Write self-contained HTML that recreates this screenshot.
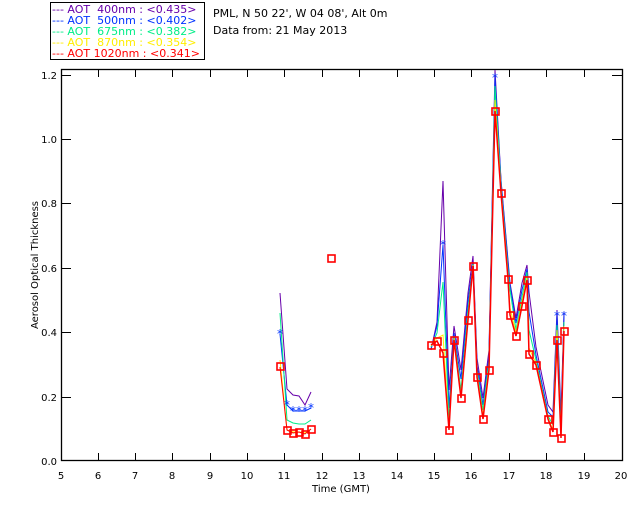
<!DOCTYPE html>
<html><head><style>
html,body{margin:0;padding:0;background:#fff;width:640px;height:512px;overflow:hidden}
svg{display:block;font-family:"DejaVu Sans","Liberation Sans",sans-serif}
</style></head><body>
<svg width="640" height="512" viewBox="0 0 640 512" xmlns="http://www.w3.org/2000/svg">
<rect x="0" y="0" width="640" height="512" fill="#fff"/>
<rect x="50.5" y="2.5" width="154" height="57" fill="none" stroke="#000"/>
<g font-size="11">
<text x="52" y="13" fill="#6600aa">--- AOT&#160; 400nm : &lt;0.435&gt;</text>
<text x="52" y="24" fill="#0033ff">--- AOT&#160; 500nm : &lt;0.402&gt;</text>
<text x="52" y="35" fill="#00ee88">--- AOT&#160; 675nm : &lt;0.382&gt;</text>
<text x="52" y="46" fill="#ffee00">--- AOT&#160; 870nm : &lt;0.354&gt;</text>
<text x="52" y="57" fill="#ff0000">--- AOT 1020nm : &lt;0.341&gt;</text>
</g>
<g font-size="11" fill="#000">
<text x="213" y="17">PML, N 50 22', W 04 08', Alt 0m</text>
<text x="213" y="34">Data from: 21 May 2013</text>
</g>
<g stroke="#000" fill="none" stroke-width="1.3">
<rect x="61.5" y="69.5" width="561" height="391"/>
</g>
<g stroke="#000" stroke-width="1">
<path d="M98.5 461v-8M135.5 461v-8M172.5 461v-8M210.5 461v-8M247.5 461v-8M284.5 461v-8M322.5 461v-8M359.5 461v-8M397.5 461v-8M434.5 461v-8M471.5 461v-8M509.5 461v-8M546.5 461v-8M584.5 461v-8"/>
<path d="M98.5 69v8M135.5 69v8M172.5 69v8M210.5 69v8M247.5 69v8M284.5 69v8M322.5 69v8M359.5 69v8M397.5 69v8M434.5 69v8M471.5 69v8M509.5 69v8M546.5 69v8M584.5 69v8"/>
<path d="M61 75.5h10M61 139.5h10M61 203.5h10M61 268.5h10M61 332.5h10M61 397.5h10M622 75.5h-10M622 139.5h-10M622 203.5h-10M622 268.5h-10M622 332.5h-10M622 397.5h-10"/>
</g>
<g font-size="10" fill="#000" text-anchor="middle">
<text x="61" y="479">5</text><text x="98" y="479">6</text><text x="135" y="479">7</text><text x="172" y="479">8</text><text x="210" y="479">9</text><text x="247" y="479">10</text><text x="284" y="479">11</text><text x="322" y="479">12</text><text x="359" y="479">13</text><text x="397" y="479">14</text><text x="434" y="479">15</text><text x="471" y="479">16</text><text x="509" y="479">17</text><text x="546" y="479">18</text><text x="584" y="479">19</text><text x="621" y="479">20</text>
<text x="341" y="492">Time (GMT)</text>
</g>
<g font-size="10" fill="#000" text-anchor="end">
<text x="57" y="465">0.0</text><text x="57" y="401">0.2</text><text x="57" y="336">0.4</text><text x="57" y="272">0.6</text><text x="57" y="207">0.8</text><text x="57" y="143">1.0</text><text x="57" y="79">1.2</text>
</g>
<text font-size="10" fill="#000" text-anchor="middle" transform="translate(38 265) rotate(-90)">Aerosol Optical Thickness</text>
<g fill="none" stroke-width="1">
<polyline stroke="#6600aa" points="280,293 287,389 293,395 299,396 305,405 311,392"/>
<polyline stroke="#0033ff" points="280,334 287,405 293,411 299,411 305,411 311,408"/>
<polyline stroke="#00ee88" points="280,313 287,420 293,423 299,424 305,424 311,420"/>
<polyline stroke="#ffee00" points="280,360 287,430 293,432 299,432 305,433 311,429"/>
<polyline stroke="#ff0000" points="280,367 287,430 293,433 299,432 305,434 311,429"/>
<polyline stroke="#6600aa" points="431,350 437,322 443,181 449,390 454,326 461,370 468,293 473,256 477,358 483,398 489,350 495,70 501,180 508,260 510,283 516,318 522,283 527,265 529,292 536,347 548,405 553,412 557,310 561,415 564,312"/>
<polyline stroke="#0033ff" points="431,349 437,326 443,245 449,408 454,333 461,379 468,301 473,263 477,365 483,405 489,356 495,78 501,181 508,263 510,285 516,323 522,290 527,269 529,312 536,355 548,412 553,417 557,316 561,422 564,316"/>
<polyline stroke="#00ee88" points="431,347 437,333 443,282 449,420 454,336 461,390 468,310 473,264 477,370 483,410 489,361 495,86 501,186 508,270 510,290 516,330 522,297 527,272 529,330 536,360 548,416 553,425 557,325 561,430 564,322"/>
<polyline stroke="#ffee00" points="431,346 437,338 443,335 449,428 454,338 461,396 468,316 473,265 477,374 483,416 489,366 495,100 501,190 508,275 510,308 516,333 522,302 527,277 529,348 536,363 548,418 553,430 557,330 561,436 564,326"/>
<polyline stroke="#ff0000" stroke-width="1.5" points="431,345 437,341 443,353 449,430 454,340 461,398 468,320 473,266 477,377 483,419 489,370 495,111 501,193 508,279 510,315 516,336 522,306 527,280 529,354 536,365 548,419 553,432 557,340 561,438 564,331"/>
</g>
<g fill="none" stroke="#ff0000" stroke-width="1.6">
<rect x="277" y="363" width="7" height="7"/><rect x="284" y="427" width="7" height="7"/><rect x="290" y="430" width="7" height="7"/><rect x="296" y="429" width="7" height="7"/><rect x="302" y="431" width="7" height="7"/><rect x="308" y="426" width="7" height="7"/>
<rect x="328" y="255" width="7" height="7"/>
<rect x="428" y="342" width="7" height="7"/><rect x="434" y="338" width="7" height="7"/><rect x="440" y="350" width="7" height="7"/><rect x="446" y="427" width="7" height="7"/><rect x="451" y="337" width="7" height="7"/><rect x="458" y="395" width="7" height="7"/><rect x="465" y="317" width="7" height="7"/><rect x="470" y="263" width="7" height="7"/><rect x="474" y="374" width="7" height="7"/><rect x="480" y="416" width="7" height="7"/><rect x="486" y="367" width="7" height="7"/><rect x="492" y="108" width="7" height="7"/><rect x="498" y="190" width="7" height="7"/><rect x="505" y="276" width="7" height="7"/><rect x="507" y="312" width="7" height="7"/><rect x="513" y="333" width="7" height="7"/><rect x="519" y="303" width="7" height="7"/><rect x="524" y="277" width="7" height="7"/><rect x="526" y="351" width="7" height="7"/><rect x="533" y="362" width="7" height="7"/><rect x="545" y="416" width="7" height="7"/><rect x="550" y="429" width="7" height="7"/><rect x="554" y="337" width="7" height="7"/><rect x="558" y="435" width="7" height="7"/><rect x="561" y="328" width="7" height="7"/>
</g>
<g fill="#0033ff" font-size="12" text-anchor="middle">
<text x="280" y="338">*</text><text x="287" y="409">*</text><text x="293" y="415">*</text><text x="299" y="415">*</text><text x="305" y="415">*</text><text x="311" y="412">*</text>
<text x="443" y="249">*</text><text x="495" y="82">*</text><text x="557" y="320">*</text><text x="564" y="320">*</text>
</g>
</svg>
</body></html>
